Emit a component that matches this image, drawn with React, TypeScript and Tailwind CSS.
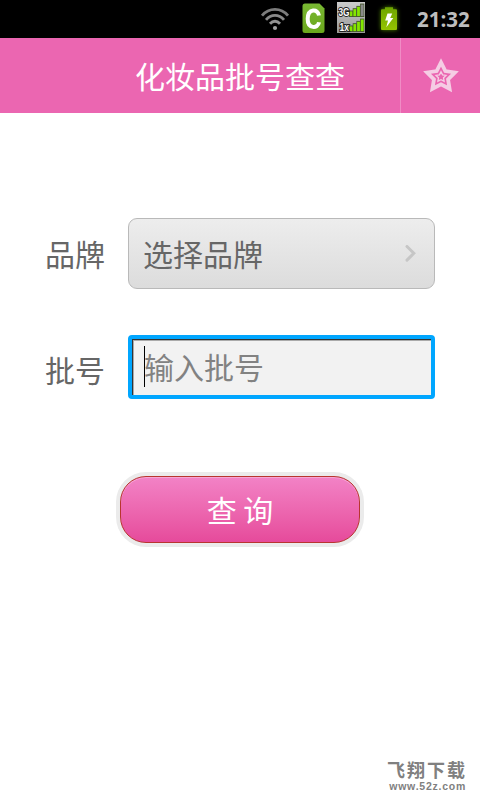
import { useState } from "react"

const star = (cx: number, cy: number, outer: number, inner: number) =>
  Array.from({ length: 10 }, (_, i) => {
    const r = i % 2 === 0 ? outer : inner
    const a = (Math.PI / 5) * i - Math.PI / 2
    return `${(cx + r * Math.cos(a)).toFixed(2)},${(cy + r * Math.sin(a)).toFixed(2)}`
  }).join(" ")

function WifiIcon() {
  return (
    <svg width="30" height="24" viewBox="0 0 30 24" fill="none" stroke="#8e8e8e" strokeWidth="2.8">
      <path d="M2 7.6C9 -0.6 21 -0.6 28 7.6" stroke="#7c7c7c" />
      <path d="M6 11.8C11 6 19 6 24 11.8" stroke="#888" />
      <path d="M10 15.8C13 12.4 17 12.4 20 15.8" stroke="#949494" />
      <circle cx="15" cy="20" r="2.1" fill="#a2a2a2" stroke="none" />
    </svg>
  )
}

function AppIcon() {
  return (
    <svg width="24" height="31" viewBox="0 0 24 31">
      <defs>
        <linearGradient id="app" x1="0" y1="0" x2="0" y2="1">
          <stop offset="0" stopColor="#79b833" />
          <stop offset="1" stopColor="#6aa71c" />
        </linearGradient>
      </defs>
      <path d="M3 .5H17.5L22.5 5.5V27.5Q22.5 30 20 30H3Q.5 30 .5 27.5V3Q.5 .5 3 .5Z" fill="url(#app)" />
      <path
        d="M17 12.5C16 5.5 6 5.3 5.7 15.8C5.5 26 16 26 17 19.3"
        fill="none"
        stroke="#fff"
        strokeWidth="4"
      />
    </svg>
  )
}

function SignalIcon() {
  const bars = [0, 1, 2, 3]
  return (
    <svg width="28" height="31" viewBox="0 0 28 31">
      <defs>
        <linearGradient id="sig" x1="0" y1="0" x2="0" y2="1">
          <stop offset="0" stopColor="#ccc" />
          <stop offset="1" stopColor="#999" />
        </linearGradient>
      </defs>
      <rect width="28" height="31" fill="url(#sig)" />
      {bars.map((i) => (
        <g key={i}>
          <rect x={12 + i * 3.7} y={8.5 - i * 2.3} width="4.2" height={6.5 + i * 2.3} fill="#46562e" />
          <rect x={12.7 + i * 3.7} y={9.4 - i * 2.3} width="2.8" height={4.7 + i * 2.3} fill={i === 3 ? "#8a8a8a" : "#84e600"} />
          <rect x={12 + i * 3.7} y={23.5 - i * 2.3} width="4.2" height={6.5 + i * 2.3} fill="#46562e" />
          <rect x={12.7 + i * 3.7} y={24.4 - i * 2.3} width="2.8" height={4.7 + i * 2.3} fill="#84e600" />
        </g>
      ))}
      <g fill="#fff" stroke="#222" strokeWidth="2" paintOrder="stroke" fontFamily="Liberation Sans, sans-serif" fontWeight="700">
        <text x="1.5" y="14" fontSize="10" textLength="11" lengthAdjust="spacingAndGlyphs">3G</text>
        <text x="2.5" y="29" fontSize="10" textLength="9.5" lengthAdjust="spacingAndGlyphs">1x</text>
      </g>
    </svg>
  )
}

function BatteryIcon() {
  return (
    <svg width="24" height="30" viewBox="0 0 24 30" className="drop-shadow-[0_0_2px_#4f8500]">
      <defs>
        <linearGradient id="bat" x1="0" y1="0" x2="0" y2="1">
          <stop offset="0" stopColor="#6ea500" />
          <stop offset="1" stopColor="#94c400" />
        </linearGradient>
      </defs>
      <path d="M8 4.3H16V6.3H19Q20 6.3 20 7.3V26Q20 27 19 27H5Q4 27 4 26V7.3Q4 6.3 5 6.3H8Z" fill="url(#bat)" />
      <path d="M10.5 10.5H15.2L13.2 15H16.3L9.3 24.2L11 17.5H8.2Z" fill="#fff" />
    </svg>
  )
}

export default function App() {
  const [batch, setBatch] = useState("")

  return (
    <div className="flex h-[800px] w-[480px] flex-col overflow-hidden bg-white font-['Noto_Sans_CJK_SC',sans-serif] text-[30px] text-[#666]">
      {/* Status bar */}
      <div className="flex h-[38px] shrink-0 items-start justify-end bg-black pr-[10px]">
        <div className="mr-[12px] mt-[8px]"><WifiIcon /></div>
        <div className="mr-[11px] mt-[3px]"><AppIcon /></div>
        <div className="mr-[12px] mt-[2px]"><SignalIcon /></div>
        <div className="mr-[16px] mt-[3px]"><BatteryIcon /></div>
        <span className="mt-[4px] w-[53px] whitespace-nowrap font-['Open_Sans',sans-serif] text-[20.5px] font-bold leading-[30px] text-[#bdbdbd]">
          21:32
        </span>
      </div>

      {/* Header */}
      <header className="flex h-[75px] shrink-0 bg-[#eb66b1] text-white">
        <h1 className="flex-1 pl-[135px] leading-[74px]">化妆品批号查查</h1>
        <button type="button" className="flex w-[80px] items-center justify-center border-l border-[#f08cc5]">
          <svg width="36" height="36" viewBox="0 0 36 36" fill="none" stroke="#f5cde4" strokeLinejoin="miter">
            <polygon points={star(18, 19, 14.6, 7.4)} strokeWidth="3.8" />
            <polygon points={star(18, 19, 5.2, 2.7)} strokeWidth="1.4" />
          </svg>
        </button>
      </header>

      <main className="flex flex-col pl-[45px] pt-[105px]">
        {/* Brand */}
        <div className="flex items-center">
          <span className="w-[83px]">品牌</span>
          <button
            type="button"
            className="flex h-[71px] w-[307px] items-center justify-between rounded-[9px] border border-[#b9b9b9] bg-linear-to-b from-[#ededed] to-[#dcdcdc] pl-[14px] pr-[18px]"
          >
            <span className="pb-px">选择品牌</span>
            <svg width="12" height="18" viewBox="0 0 12 18" fill="none" stroke="#c6c6c6" strokeWidth="3" strokeLinecap="round">
              <path d="M3 1.5L9.8 8.3L3 15.1" />
            </svg>
          </button>
        </div>

        {/* Batch number */}
        <div className="mt-[46px] flex items-center">
          <span className="w-[83px] pt-[4px]">批号</span>
          <label className="flex h-[64px] w-[307px] rounded-[4px] border-4 border-[#00a6ff] bg-[#00a6ff]">
            <span className="flex w-full items-start border-l border-t border-[#333] bg-[#f2f2f2] pl-[11px] pt-[6px] shadow-[inset_1px_1px_0_#aaa]">
              <span className="h-[41px] w-px shrink-0 bg-black" />
              <input
                value={batch}
                onChange={(e) => setBatch(e.target.value)}
                placeholder="输入批号"
                className="-ml-px h-[40px] w-[270px] bg-transparent leading-[40px] outline-none placeholder:text-[#828282]"
              />
            </span>
          </label>
        </div>

        <button
          type="button"
          className="ml-[71px] mt-[73px] h-[75px] w-[248px] rounded-[30px] bg-[#ebebeb] p-[4px] text-white"
        >
          <span className="block h-[67px] rounded-[26px] border border-[#b8352f] bg-linear-to-b from-[#f282c6] to-[#e64a9b] leading-[64px] shadow-[inset_0_1px_0_#f6a5d5]">
            查 询
          </span>
        </button>
      </main>

      {/* Site mark */}
      <footer className="mb-[8px] mr-[13px] mt-auto flex flex-col items-end text-[#808080]">
        <span className="text-[18px] font-bold leading-[20px] tracking-[2px]">飞翔下载</span>
        <span className="mr-px mt-[2px] font-['Liberation_Sans',sans-serif] text-[10.5px] font-bold leading-[11px] tracking-[0.75px]">
          www.52z.com
        </span>
      </footer>
    </div>
  )
}
